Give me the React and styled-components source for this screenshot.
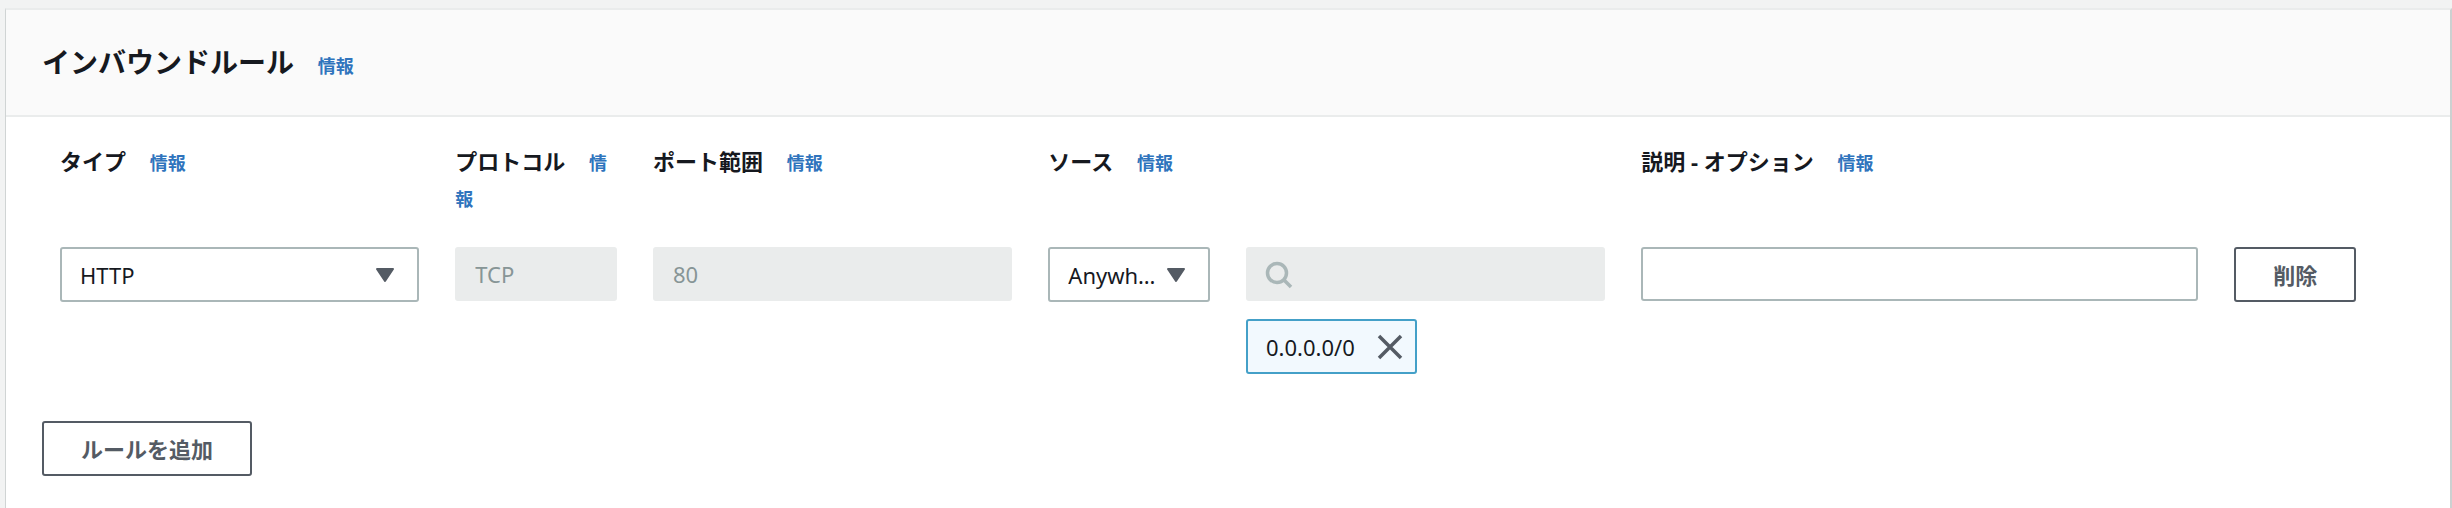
import React, { useState } from "react";
import styled, { createGlobalStyle } from "styled-components";

const GlobalStyle = createGlobalStyle`
  * {
    box-sizing: border-box;
  }

  body {
    margin: 0;
    background: #f2f3f3;
    color: #16191f;
    font-family: "Noto Sans", "Noto Sans CJK JP", sans-serif;
    font-size: 22px;
    line-height: 36px;
  }

  button,
  input,
  select {
    font: inherit;
  }
`;

const Page = styled.main`
  display: flex;
  flex-direction: column;
  min-height: 100vh;
  padding: 8px 0 0 5px;
`;

// Panel
const Panel = styled.section`
  flex: 1;
  background: #ffffff;
  border-top: 2px solid #eaecec;
  border-left: 1px solid #d0d4d4;
  border-right: 2px solid #ccd1d1;
`;

const PanelHeader = styled.header`
  padding: 36px 36px 33px;
  background: #fafafa;
  border-bottom: 2px solid #eaecec;
`;

const Title = styled.h2`
  display: inline;
  margin: 0;
  font-size: 28px;
  font-weight: bold;
  line-height: 28px;
`;

const InfoLink = styled.a`
  margin-left: 18px;
  color: #2f74bd;
  font-size: 18px;
  font-weight: bold;
  line-height: 18px;
  text-decoration: none;

  &:hover {
    text-decoration: underline;
  }
`;

const PanelBody = styled.div`
  padding: 26px 36px 32px;
`;

// 12 column grid, each field says how many columns it takes
const RuleGrid = styled.div`
  display: grid;
  grid-template-columns: repeat(12, minmax(0, 1fr));
  column-gap: 36px;
  row-gap: 32px;
  align-items: start;
  padding: 0 18px;
`;

const Cell = styled.div`
  grid-column: span ${({ $span }) => $span};
`;

const Label = styled.label`
  font-weight: bold;
`;

// Form controls
const Input = styled.input`
  display: block;
  width: 100%;
  height: 54px;
  padding: 0 18px;
  border: 2px solid #aab7b8;
  border-radius: 3px;
  background: #ffffff;
  color: #16191f;

  &:disabled {
    border-color: #eaecec;
    background: #eaecec;
    color: #879596;
  }
`;

const SelectWrap = styled.div`
  position: relative;

  svg {
    position: absolute;
    top: 20px;
    right: 24px;
    pointer-events: none;
  }
`;

const Select = styled.select`
  display: block;
  width: 100%;
  height: 55px;
  padding: 0 50px 0 18px;
  appearance: none;
  border: 2px solid #aab7b8;
  border-radius: 3px;
  background: #ffffff;
  color: #16191f;
  overflow: hidden;
  text-overflow: ellipsis;
  white-space: nowrap;
`;

const SearchWrap = styled.div`
  position: relative;

  svg {
    position: absolute;
    top: 14px;
    left: 19px;
  }

  input {
    padding-left: 60px;
  }
`;

const Button = styled.button`
  height: 55px;
  padding: 0 37px;
  border: 2px solid #545b64;
  border-radius: 3px;
  background: #ffffff;
  color: #545b64;
  font-weight: bold;
  line-height: 36px;
  white-space: nowrap;
  cursor: pointer;
`;

const Chip = styled.div`
  display: inline-flex;
  align-items: center;
  gap: 22px;
  height: 55px;
  margin-top: 18px;
  padding: 0 12px 0 18px;
  border: 2px solid #44a0c8;
  border-radius: 3px;
  background: #f2f9fe;
`;

const ChipClose = styled.button`
  display: flex;
  padding: 0;
  border: 0;
  background: none;
  cursor: pointer;
`;

const Actions = styled.div`
  margin-top: 47px;
`;

const CaretIcon = () => (
  <svg width="20" height="16" viewBox="0 0 20 16" aria-hidden="true">
    <path
      d="M2 2h16L10 14z"
      fill="#545b64"
      stroke="#545b64"
      strokeWidth="2"
      strokeLinejoin="round"
    />
  </svg>
);

const SearchIcon = () => (
  <svg width="28" height="28" viewBox="0 0 28 28" fill="none" aria-hidden="true">
    <circle cx="12" cy="12" r="9.5" stroke="#aab7b8" strokeWidth="3.5" />
    <path d="M18.5 18.5l7.5 7.5" stroke="#aab7b8" strokeWidth="3.5" />
  </svg>
);

const CloseIcon = () => (
  <svg width="26" height="26" viewBox="0 0 26 26" fill="none" aria-hidden="true">
    <path
      d="M2 2l22 22M24 2L2 24"
      stroke="#545b64"
      strokeWidth="3.5"
    />
  </svg>
);

const headings = [
  { id: "type", text: "タイプ", span: 2 },
  { id: "protocol", text: "プロトコル", span: 1 },
  { id: "port", text: "ポート範囲", span: 2 },
  { id: "source", text: "ソース", span: 3 },
  { id: "description", text: "説明 - オプション", span: 4 },
];

const App = () => {
  const [description, setDescription] = useState("");

  return (
    <>
      <GlobalStyle />
      <Page lang="ja">
        <Panel>
          <PanelHeader>
            <Title>インバウンドルール</Title> <InfoLink href="#info">情報</InfoLink>
          </PanelHeader>

          <PanelBody>
            <RuleGrid>
              {/* Column headings */}
              {headings.map(({ id, text, span }) => (
                <Cell key={id} $span={span}>
                  <Label htmlFor={id}>{text}</Label>{" "}
                  <InfoLink href={`#${id}-info`}>情報</InfoLink>
                </Cell>
              ))}

              {/* Rule */}
              <Cell $span={2}>
                <SelectWrap>
                  <Select id="type" defaultValue="http">
                    <option value="http">HTTP</option>
                  </Select>
                  <CaretIcon />
                </SelectWrap>
              </Cell>
              <Cell $span={1}>
                <Input id="protocol" value="TCP" disabled readOnly />
              </Cell>
              <Cell $span={2}>
                <Input id="port" value="80" disabled readOnly />
              </Cell>
              <Cell $span={1}>
                <SelectWrap>
                  <Select id="source" defaultValue="anywhere">
                    <option value="anywhere">Anywhere</option>
                  </Select>
                  <CaretIcon />
                </SelectWrap>
              </Cell>
              <Cell $span={2}>
                <SearchWrap>
                  <SearchIcon />
                  <Input type="search" aria-label="ソース" disabled />
                </SearchWrap>
                <Chip>
                  0.0.0.0/0
                  <ChipClose type="button" aria-label="削除">
                    <CloseIcon />
                  </ChipClose>
                </Chip>
              </Cell>
              <Cell $span={3}>
                <Input
                  id="description"
                  value={description}
                  onChange={(e) => setDescription(e.target.value)}
                />
              </Cell>
              <Cell $span={1}>
                <Button type="button">削除</Button>
              </Cell>
            </RuleGrid>

            <Actions>
              <Button type="button">ルールを追加</Button>
            </Actions>
          </PanelBody>
        </Panel>
      </Page>
    </>
  );
};

export default App;
